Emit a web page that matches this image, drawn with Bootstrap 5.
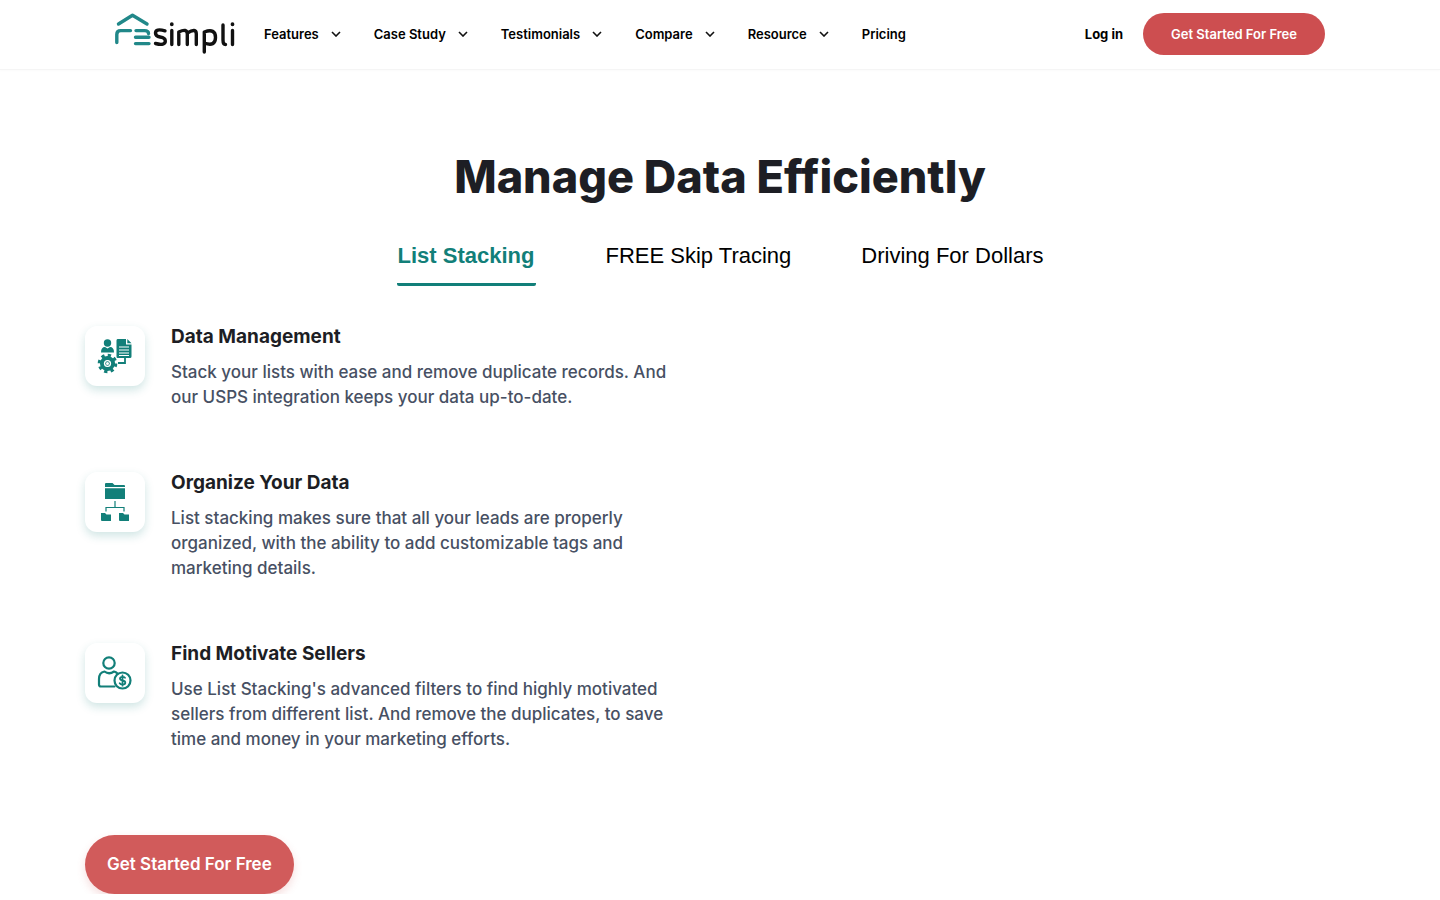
<!DOCTYPE html>
<html lang="en">
<head>
<meta charset="utf-8">
<meta name="viewport" content="width=device-width, initial-scale=1">
<title>REsimpli - Manage Data Efficiently</title>
<link href="https://cdn.jsdelivr.net/npm/bootstrap@5.3.0/dist/css/bootstrap.min.css" rel="stylesheet">
<style>
:root { --teal: #127f79; --ink: #1d1e24; --slate: #475063; }
body { font-family: Inter, "Open Sans", sans-serif; color: var(--ink); background: #fff; }
.site-header { border-bottom: 1px solid #f5f5f5; box-shadow: 0 1px 2px rgba(0,0,0,.02); min-height: 70px; padding-bottom: 2px; }
.header-inner { max-width: 1210px; }
.page-inner { max-width: 1270px; }
.brand-logo { width: 120px; height: 42px; margin-right: 29px; }
.menu-list { gap: 33px; }
.menu-list a, .login-link { font-size: 13px; line-height: 20px; font-weight: 600; color: #000; text-decoration: none; white-space: nowrap; }
.menu-list a { display: flex; align-items: center; gap: 12px; }
.login-link { font-weight: 700; }
.menu-list svg { width: 10px; height: 6px; }
.cta { --bs-btn-color: #fff; --bs-btn-hover-color: #fff; --bs-btn-bg: #cd4e50; --bs-btn-hover-bg: #bd4345; --bs-btn-border-width: 0; font-weight: 600; border-radius: 30px; white-space: nowrap; }
.cta-sm { font-size: 13px; line-height: 20px; padding: 11px 28px; }
.cta-lg { --bs-btn-bg: #d15b5b; font-size: 17px; line-height: 27px; padding: 16px 22px; box-shadow: 0 4px 8px rgba(209,91,91,.2); }
.headline { font-size: 45px; line-height: 56px; font-weight: 800; padding-top: 79px; margin-bottom: 37px; }
.topic-tabs { gap: 70px; margin-bottom: 38px; }
.topic-tabs button { font-family: "Liberation Sans", Arial, sans-serif; font-size: 22px; line-height: 28px; min-width: 139px; padding: 0 0 13px; color: #000; background: none; border: 0; border-bottom: 3px solid transparent; border-radius: 2px; }
.topic-tabs button.active { color: var(--teal); font-weight: 700; border-bottom-color: var(--teal); }
.feature-list { gap: 60px; margin-bottom: 83px; }
.feature-item { gap: 26px; }
.icon-tile { width: 60px; height: 60px; margin-top: 2px; border-radius: 12px; background: #fff; box-shadow: 0 4px 10px rgba(18,127,121,.2); color: var(--teal); }
.feature-item h2 { font-size: 19px; line-height: 26px; font-weight: 700; margin-bottom: 10px; }
.feature-item p { font-size: 17px; line-height: 25px; font-weight: 500; color: var(--slate); margin: 0; }
</style>
</head>
<body>
<svg class="d-none" aria-hidden="true"><symbol id="chev" viewBox="0 0 10 6"><path d="M1 1l4 4 4-4" fill="none" stroke="#111" stroke-width="1.6"/></symbol></svg>
<header class="site-header d-flex align-items-center">
  <div class="header-inner container-fluid px-0 d-flex align-items-center">
    <a href="#" class="brand-logo flex-shrink-0" aria-label="REsimpli">
      <svg width="120" height="42" viewBox="0 0 120 42" fill="none" stroke-linecap="round" stroke-linejoin="round">
        <g stroke="#218889" stroke-width="3.4"><path d="M3.500 11L17.500 2.200L32 11"/><path d="M1.800 29.500V21.500Q1.800 17.600 5.700 17.600H15.500M21 17.600H29.500Q33.500 17.600 33.500 20.500M20.500 24.300H34M20.500 30.600H34"/></g>
        <g stroke="#111" stroke-width="3.400"><path d="M50 17.800Q40.500 15.200 40.500 20Q40.500 23.300 45 24Q50.300 24.800 50.300 28Q50.300 33 40.500 30.500M56.800 17.500V31.500M63.800 31.500V19Q72.300 15 72.300 21V31.500M72.300 20Q81.300 14.500 81.300 21V31.500M89.300 39V19Q100.500 15 100.500 24.500Q100.500 34 89.300 30M108 12V27Q108 31.500 110.500 31.500M117.500 17.500V31.500"/><path d="M56.800 11.200V11.300M117.500 11.200V11.300" stroke-width="3.800"/></g>
      </svg>
    </a>
    <nav aria-label="Main"><ul class="menu-list list-unstyled d-flex mb-0">
      <li><a href="#">Features <svg><use href="#chev"/></svg></a></li>
      <li><a href="#">Case Study <svg><use href="#chev"/></svg></a></li>
      <li><a href="#">Testimonials <svg><use href="#chev"/></svg></a></li>
      <li><a href="#">Compare <svg><use href="#chev"/></svg></a></li>
      <li><a href="#">Resource <svg><use href="#chev"/></svg></a></li>
      <li><a href="#">Pricing</a></li>
    </ul></nav>
    <a href="#" class="login-link ms-auto me-3 pe-1">Log in</a>
    <button type="button" class="btn cta cta-sm">Get Started For Free</button>
  </div>
</header>
<main class="page-inner container-fluid px-0">
  <h1 class="headline text-center">Manage Data Efficiently</h1>
  <div class="topic-tabs d-flex justify-content-center" role="tablist">
    <button type="button" class="active" role="tab" aria-selected="true">List Stacking</button>
    <button type="button" role="tab" aria-selected="false">FREE Skip Tracing</button>
    <button type="button" role="tab" aria-selected="false">Driving For Dollars</button>
  </div>
  <div class="row g-0"><div class="col-lg-6 pe-5">
    <div class="feature-list d-flex flex-column">
      <article class="feature-item d-flex align-items-start">
        <div class="icon-tile d-flex align-items-center justify-content-center flex-shrink-0">
          <svg width="36" height="36" viewBox="0 0 36 36" fill="currentColor">
            <circle cx="10.500" cy="5" r="3.700"/><path d="M4 14.500Q4 9 8 9L10.500 10.500L13 9Q17 9 17 14.500Z"/>
            <path d="M20.500 1H29V6.500H34.500V18.500Q34.500 20 33 20H20.500Q19.500 20 19.500 18.500V2.500Q19.500 1 20.500 1ZM30.300 1L34.500 5.300H30.300Z"/>
            <path d="M22 9H32M22 12H32M22 15H32M22 17.500H32" stroke="#fff" stroke-width="1.200"/>
            <path d="M28 20V25H21" fill="none" stroke="currentColor" stroke-width="1.800"/>
            <circle cx="10.500" cy="25.500" r="5.300" fill="none" stroke="currentColor" stroke-width="4.500"/>
            <circle cx="10.500" cy="25.500" r="8.200" fill="none" stroke="currentColor" stroke-width="3.200" stroke-dasharray="3.220 3.220"/>
            <circle cx="10.500" cy="25.500" r="3.600" fill="#fff"/><circle cx="10.500" cy="25.500" r="2.200"/><circle cx="10.500" cy="25.500" r="1.500" fill="#fff"/>
          </svg>
        </div>
        <div><h2>Data Management</h2><p>Stack your lists with ease and remove duplicate records. And our USPS integration keeps your data up-to-date.</p></div>
      </article>
      <article class="feature-item d-flex align-items-start">
        <div class="icon-tile d-flex align-items-center justify-content-center flex-shrink-0">
          <svg width="30" height="40" viewBox="0 0 30 40" fill="currentColor">
            <path d="M5 5V2Q5 1 6 1H12.500L14.500 3H24Q25 3 25 4V5ZM5 6.300H25V17H5Z"/>
            <path d="M15 19V25M6 29.500V25.500H24V29.500" fill="none" stroke="currentColor" stroke-width="1.200"/>
            <path d="M1 31H5L6.500 32.500H11V39H2Q1 39 1 38ZM19 31H23L24.500 32.500H29V39H20Q19 39 19 38Z"/>
          </svg>
        </div>
        <div><h2>Organize Your Data</h2><p>List stacking makes sure that all your leads are properly organized, with the ability to add customizable tags and marketing details.</p></div>
      </article>
      <article class="feature-item d-flex align-items-start">
        <div class="icon-tile d-flex align-items-center justify-content-center flex-shrink-0">
          <svg width="36" height="36" viewBox="0 0 36 36" fill="none" stroke="currentColor" stroke-width="2.2" stroke-linecap="round" stroke-linejoin="round">
            <circle cx="12" cy="8" r="5.700"/><path d="M17.500 31.500H4Q2 31.500 2 29.500V24Q2 17.500 7.500 16.500Q12 20 17 16.500Q19 17 20.500 18.500"/>
            <circle cx="25.500" cy="25.500" r="8"/><path d="M28 22.800Q27.200 21.800 25.500 21.800Q23 21.800 23 23.500Q23 25 25.500 25.500Q28.300 26 28.300 27.700Q28.300 29.500 25.500 29.500Q23.500 29.500 22.700 28.200M25.500 20.500V30.700" stroke-width="1.8"/>
          </svg>
        </div>
        <div><h2>Find Motivate Sellers</h2><p>Use List Stacking's advanced filters to find highly motivated sellers from different list. And remove the duplicates, to save time and money in your marketing efforts.</p></div>
      </article>
    </div>
    <button type="button" class="btn cta cta-lg">Get Started For Free</button>
  </div></div>
</main>
<script src="https://cdn.jsdelivr.net/npm/bootstrap@5.3.0/dist/js/bootstrap.bundle.min.js"></script>
</body>
</html>
